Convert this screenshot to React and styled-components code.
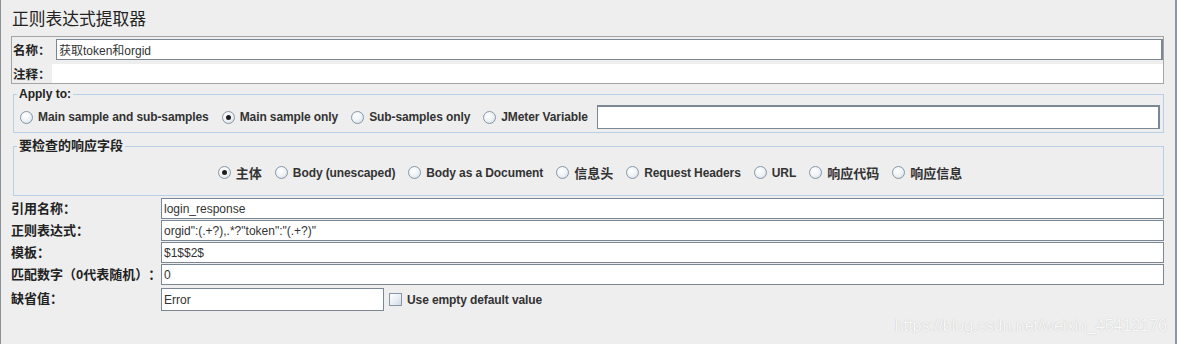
import React from 'react';
import styled, { createGlobalStyle } from 'styled-components';

const latin = `"Liberation Sans", "Noto Sans CJK SC", sans-serif`;

const GlobalStyle = createGlobalStyle`
  body {
    margin: 0;
    background: #eeeeee;
    font-family: ${latin};
    text-spacing-trim: space-all;
  }
`;

const applyOptions = [
  { label: 'Main sample and sub-samples' },
  { label: 'Main sample only', checked: true },
  { label: 'Sub-samples only' },
  { label: 'JMeter Variable' }
];

const fieldOptions = [
  { label: '主体', checked: true, cjk: true },
  { label: 'Body (unescaped)' },
  { label: 'Body as a Document' },
  { label: '信息头', cjk: true },
  { label: 'Request Headers' },
  { label: 'URL' },
  { label: '响应代码', cjk: true },
  { label: '响应信息', cjk: true }
];

const fields = [
  { label: '引用名称：', value: 'login_response' },
  { label: '正则表达式：', value: 'orgid":(.+?),.*?"token":"(.+?)"' },
  { label: '模板：', value: '$1$$2$' },
  { label: '匹配数字（0代表随机）：', value: '0' }
];

const Radio = ({ label, checked, cjk }) => (
  <RadioItem $cjk={cjk}>
    <RadioDot $checked={checked} />
    <span>{label}</span>
  </RadioItem>
);

const App = () => (
  <>
    <GlobalStyle />
    <Page>
      <Title>正则表达式提取器</Title>
      <NameGroup>
        <NameRow>
          <NameLabel $width={44}>名称：</NameLabel>
          <TextField defaultValue="获取token和orgid" />
        </NameRow>
        <CommentRow>
          <NameLabel $width={40}>注释：</NameLabel>
          <CommentArea />
        </CommentRow>
      </NameGroup>

      <Group $top={3}>
        <Legend>Apply to:</Legend>
        <ApplyRow>
          {applyOptions.map(o => (
            <Radio key={o.label} {...o} />
          ))}
          <VarField />
        </ApplyRow>
      </Group>

      <Group $top={6}>
        <Legend $cjk>要检查的响应字段</Legend>
        <FieldRow>
          {fieldOptions.map(o => (
            <Radio key={o.label} {...o} />
          ))}
        </FieldRow>
      </Group>

      <Form>
        {fields.map(f => (
          <FormRow key={f.label}>
            <FormLabel>{f.label}</FormLabel>
            <FormInput defaultValue={f.value} />
          </FormRow>
        ))}
        <DefaultRow>
          <FormLabel>缺省值：</FormLabel>
          <DefaultInput defaultValue="Error" />
          <CheckItem>
            <CheckBox />
            <span>Use empty default value</span>
          </CheckItem>
        </DefaultRow>
      </Form>

      <Watermark>https://blog.csdn.net/weixin_45412176</Watermark>
    </Page>
  </>
);

const Page = styled.div`
  position: relative;
  box-sizing: border-box;
  width: 1177px;
  height: 344px;
  overflow: hidden;
  background: #eeeeee;
  border-left: 1px solid #8b9096;
  border-right: 2px solid #8e979e;
  padding: 10px 11px 0 10px;
  color: #333333;
`;

const Title = styled.div`
  height: 20px;
  line-height: 20px;
  font-size: 16.75px;
  color: #222222;
  padding-left: 1px;
  margin-bottom: 6px;
`;

const NameGroup = styled.div`
  box-sizing: border-box;
  height: 48px;
  border: 1px solid #a5a5a5;
  display: flex;
  flex-direction: column;
`;

const NameRow = styled.div`
  display: flex;
  align-items: center;
  height: 24px;
`;

const CommentRow = styled.div`
  display: flex;
  align-items: center;
  height: 19px;
  margin-top: 3px;
`;

const NameLabel = styled.div`
  width: ${p => p.$width}px;
  flex: none;
  box-sizing: border-box;
  padding-left: 1px;
  font-size: 12.5px;
  font-weight: bold;
  color: #222222;
  white-space: nowrap;
`;

const TextField = styled.input`
  flex: 1;
  min-width: 0;
  box-sizing: border-box;
  height: 21px;
  margin: 1px 0 0;
  padding: 0 2px;
  border: 1px solid #7b8793;
  border-right-width: 2px;
  background: #ffffff;
  font-family: ${latin};
  font-size: 12px;
  color: #333333;
  outline: none;
`;

const CommentArea = styled.div`
  flex: 1;
  align-self: stretch;
  background: #ffffff;
`;

const Group = styled.fieldset`
  margin: ${p => p.$top}px 0 0 2px;
  padding: 0 3px 3px 6px;
  border: 1px solid #b8cfe5;
  min-width: 0;
`;

const Legend = styled.legend`
  padding: 0 2px;
  margin-left: -3px;
  font-size: ${p => (p.$cjk ? 13 : 12)}px;
  line-height: 14px;
  font-weight: bold;
  color: #222222;
`;

const ApplyRow = styled.div`
  display: flex;
  align-items: center;
  gap: 13px;
  padding-top: 4px;
`;

const FieldRow = styled.div`
  display: flex;
  align-items: center;
  justify-content: center;
  gap: 13px;
  height: 39px;
`;

const RadioItem = styled.label`
  display: flex;
  align-items: center;
  gap: 5px;
  font-size: ${p => (p.$cjk ? 13 : 12)}px;
  letter-spacing: ${p => (p.$cjk ? 0 : -0.1)}px;
  font-weight: bold;
  color: #333333;
  white-space: nowrap;
`;

const RadioDot = styled.span`
  position: relative;
  flex: none;
  box-sizing: border-box;
  width: 13px;
  height: 13px;
  border-radius: 50%;
  border: 1px solid #8797a7;
  background: radial-gradient(circle at 40% 35%, #ffffff 0%, #edf1f5 55%, #c5d0dc 100%);
  &::after {
    content: '';
    display: ${p => (p.$checked ? 'block' : 'none')};
    position: absolute;
    inset: 3px;
    border-radius: 50%;
    background: #1e1e1e;
  }
`;

const VarField = styled.div`
  flex: 1;
  box-sizing: border-box;
  height: 24px;
  margin-left: -4px;
  background: #ffffff;
  border: 1px solid #7b8793;
  border-top-width: 2px;
  border-right-width: 2px;
`;

const Form = styled.div`
  margin-top: 2px;
  display: flex;
  flex-direction: column;
`;

const FormRow = styled.div`
  display: flex;
  align-items: flex-start;
  height: 22px;
`;

const FormLabel = styled.div`
  width: 150px;
  flex: none;
  height: 21px;
  line-height: 21px;
  font-size: 13px;
  font-weight: bold;
  color: #222222;
  white-space: nowrap;
`;

const FormInput = styled.input`
  flex: 1;
  min-width: 0;
  box-sizing: border-box;
  height: 21px;
  margin: 0;
  padding: 0 2px;
  border: 1px solid #7b8793;
  background: #ffffff;
  font-family: ${latin};
  font-size: 12px;
  color: #333333;
  outline: none;
`;

const DefaultRow = styled.div`
  display: flex;
  align-items: center;
  height: 23px;
  margin-top: 2px;
  ${FormLabel} {
    align-self: flex-start;
  }
`;

const DefaultInput = styled(FormInput)`
  flex: none;
  width: 223px;
  height: 23px;
`;

const CheckItem = styled.label`
  display: flex;
  align-items: center;
  gap: 5px;
  margin-left: 5px;
  font-size: 12px;
  letter-spacing: -0.1px;
  font-weight: bold;
  color: #333333;
`;

const CheckBox = styled.span`
  box-sizing: border-box;
  width: 13px;
  height: 13px;
  border: 1px solid #8797a7;
  background: linear-gradient(135deg, #ffffff 0%, #e6ecf2 60%, #cfd9e3 100%);
`;

const Watermark = styled.div`
  position: absolute;
  right: 8px;
  bottom: 9px;
  font-size: 16px;
  line-height: 18px;
  color: #f8f8f8;
  text-shadow: 0 0 1px #b8b8b8;
  pointer-events: none;
`;

export default App;
